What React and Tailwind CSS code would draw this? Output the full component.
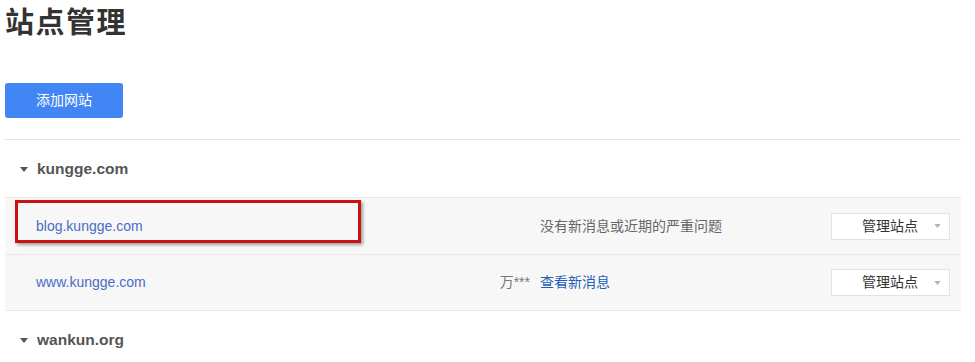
const cjk = { fontFamily: '"Liberation Sans", "Noto Sans CJK SC", Arial, sans-serif' };

function Caret({ className }) {
  return (
    <svg width="8" height="5" viewBox="0 0 8 5" className={className}>
      <path d="M0 0 L8 0 L4 5 Z" fill="currentColor" />
    </svg>
  );
}

function ManageSelect() {
  return (
    <div className="w-[119px] h-[27px] bg-white border border-[#e3e3e3] flex items-center pl-[30px] pr-[8px] text-[14px] text-[#333]">
      <span className="flex-1">管理站点</span>
      <Caret className="text-[#b5b5b5] w-[7px] h-[4px]" />
    </div>
  );
}

function GroupHeader({ name }) {
  return (
    <div className="h-[57px] flex items-center pl-[15px] gap-[9px] pt-[1px]">
      <Caret className="text-[#555]" />
      <span className="text-[15.5px] font-bold text-[#555]">{name}</span>
    </div>
  );
}

function SiteRow({ host, user, message, highlight, last }) {
  return (
    <div className={`relative h-[57px] bg-[#f7f7f7] border-t border-[#e8e8e8] flex items-center ${last ? "border-b" : ""}`}>
      {highlight && (
        <div className="absolute left-[10px] top-[2px] w-[346px] h-[43px] border-[3px] border-[#cc1111] shadow-[2px_2px_3px_rgba(0,0,0,0.35)]" />
      )}
      <a className="pl-[31px] w-[380px] text-[14px] text-[#4a6cc8]">{host}</a>
      <div className="w-[155px] text-right pr-[10px] text-[14px] text-[#777]">{user}</div>
      <div className="flex-1 text-[14px]">
        {message ? (
          <span className="text-[#666]">{message}</span>
        ) : (
          <span className="text-[#1d5fb8]">查看新消息</span>
        )}
      </div>
      <div className="pr-[11px]">
        <ManageSelect />
      </div>
    </div>
  );
}

export default function App() {
  return (
    <div style={cjk} className="bg-white w-[975px] h-[362px] overflow-hidden">
      <div className="pl-[5px] w-[961px]">
        <h1 className="pt-[3px] text-[29px] leading-[40px] font-bold text-[#333] tracking-[1.5px]">站点管理</h1>
        <button className="mt-[40px] w-[118px] h-[35px] rounded-[3px] bg-[#4285f4] text-white text-[14px]">
          添加网站
        </button>
        <div className="mt-[21px] border-t border-[#e5e5e5]" />
        <GroupHeader name="kungge.com" />
        <SiteRow host="blog.kungge.com" user="" message="没有新消息或近期的严重问题" highlight />
        <SiteRow host="www.kungge.com" user="万***" last />
        <GroupHeader name="wankun.org" />
      </div>
    </div>
  );
}
